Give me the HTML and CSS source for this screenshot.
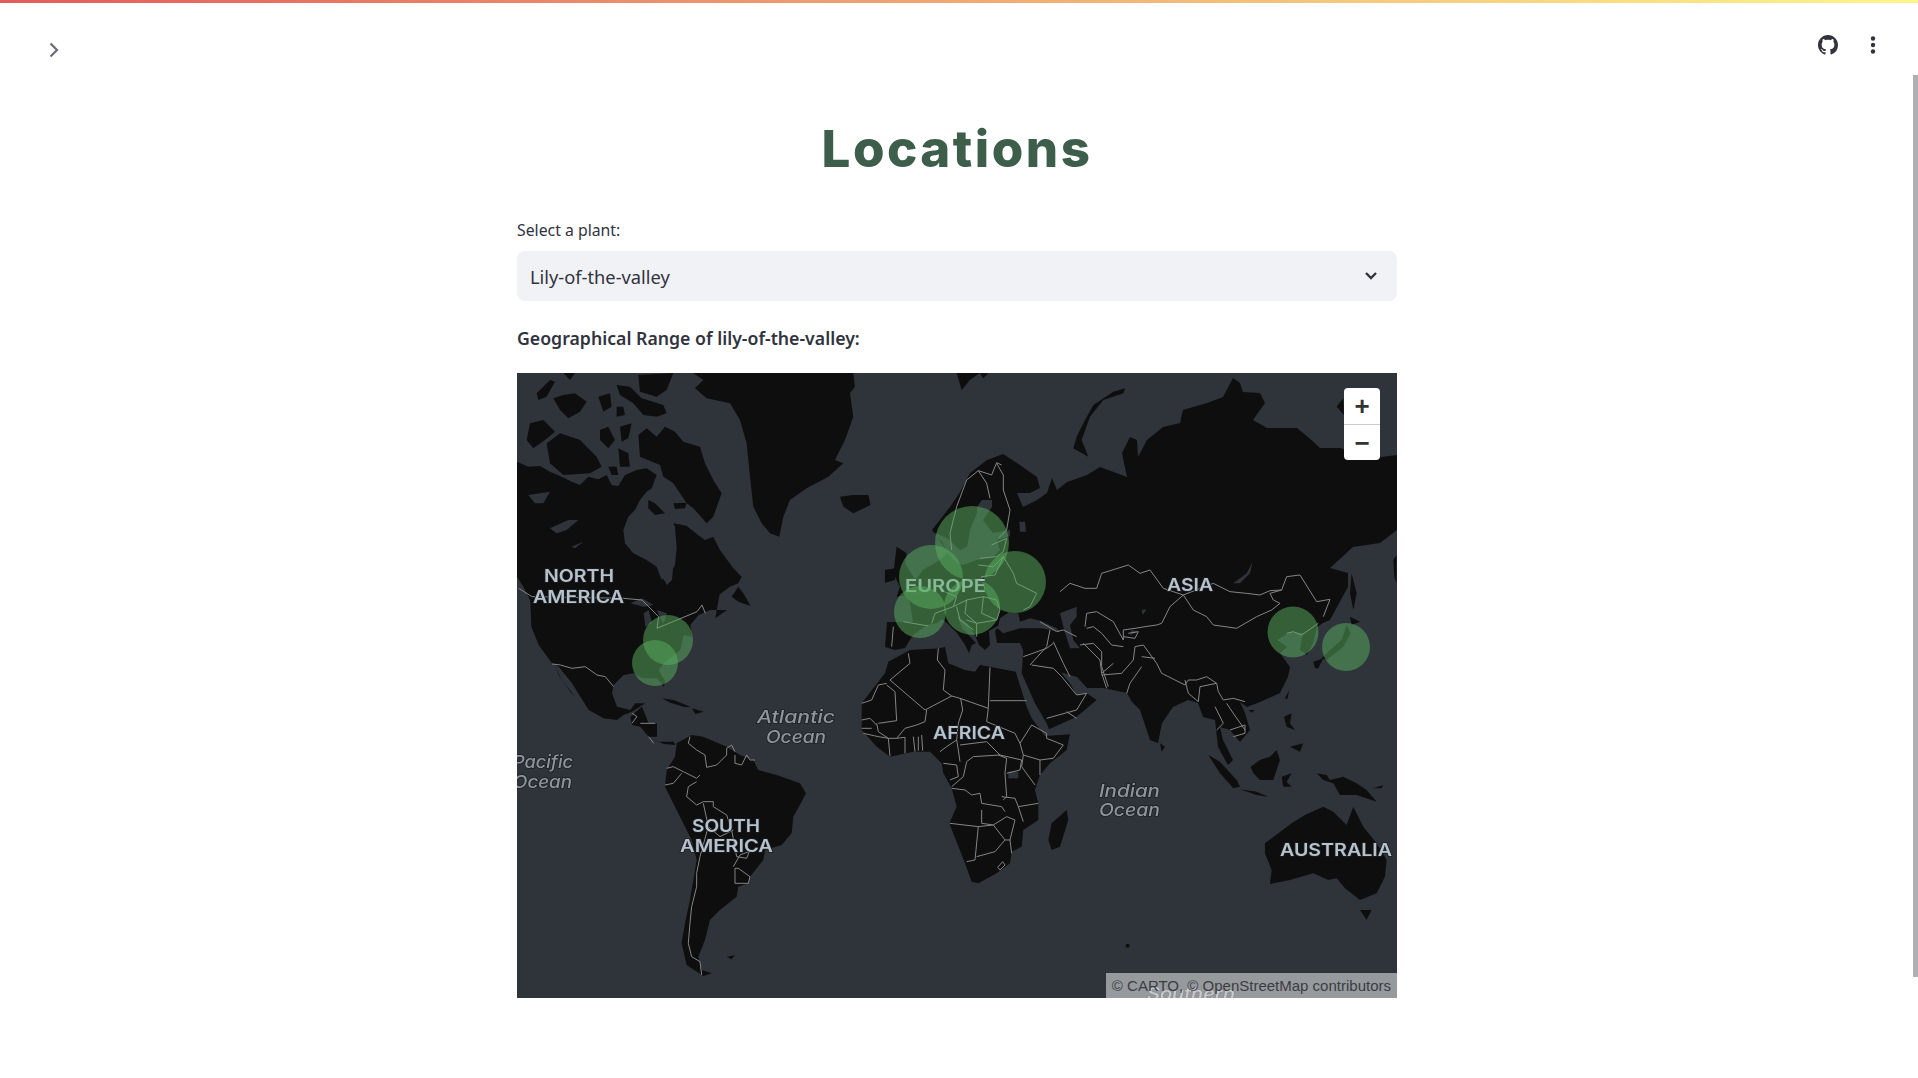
FILE: index.html
```html
<!DOCTYPE html>
<html lang="en">
<head>
  <meta charset="UTF-8" />
  <title>Locations</title>
  <link rel="stylesheet" href="styles.css">
</head>
<body>
  <div class="decoration"></div>
  <div class="scrollbar"></div>

  <header class="toolbar">
    <button class="icon-btn sidebar-toggle" aria-label="Open sidebar">
      <svg width="10" height="16" viewBox="0 0 10 16"><path d="M1.5 1.5 8 8l-6.5 6.5" fill="none" stroke="#6b6c78" stroke-width="2.2"/></svg>
    </button>
    <div class="toolbar-right">
      <button class="icon-btn" aria-label="GitHub">
        <svg width="20" height="20" viewBox="0 0 16 16"><path fill="#31333f" d="M8 0C3.58 0 0 3.58 0 8c0 3.54 2.29 6.53 5.47 7.59.4.07.55-.17.55-.38 0-.19-.01-.82-.01-1.49-2.01.37-2.53-.49-2.69-.94-.09-.23-.48-.94-.82-1.13-.28-.15-.68-.52-.01-.53.63-.01 1.08.58 1.23.82.72 1.21 1.87.87 2.33.66.07-.52.28-.87.51-1.07-1.78-.2-3.64-.89-3.64-3.95 0-.87.31-1.59.82-2.15-.08-.2-.36-1.02.08-2.12 0 0 .67-.21 2.2.82.64-.18 1.32-.27 2-.27.68 0 1.36.09 2 .27 1.53-1.04 2.2-.82 2.2-.82.44 1.1.16 1.92.08 2.12.51.56.82 1.27.82 2.15 0 3.07-1.87 3.75-3.65 3.95.29.25.54.73.54 1.48 0 1.07-.01 1.93-.01 2.2 0 .21.15.46.55.38A8.013 8.013 0 0016 8c0-4.42-3.58-8-8-8z"/></svg>
      </button>
      <button class="icon-btn" aria-label="Menu">
        <svg width="6" height="18" viewBox="0 0 6 18"><circle cx="3" cy="2.5" r="2.2" fill="#31333f"/><circle cx="3" cy="9" r="2.2" fill="#31333f"/><circle cx="3" cy="15.5" r="2.2" fill="#31333f"/></svg>
      </button>
    </div>
  </header>

  <main class="content">
    <h1 class="title">Locations</h1>

    <label class="field-label" for="plant">Select a plant:</label>
    <div class="select" id="plant">
      <span>Lily-of-the-valley</span>
      <svg width="14" height="10" viewBox="0 0 14 10"><path d="M2 2l5 5 5-5" fill="none" stroke="#31333f" stroke-width="2.4"/></svg>
    </div>

    <p class="range-heading">Geographical Range of lily-of-the-valley:</p>

    <div class="map">
      <svg class="map-canvas" width="880" height="625" viewBox="0 0 880 625">
        <rect class="water" width="880" height="625"/>

        <!-- land: each group uses the pixel grid of the crop it was traced from -->
        <g class="land">
          <g transform="translate(-17 -13) scale(.3333)">
            <path d="M51 305L85 320 120 318 150 335 185 350 215 365 240 375 265 350 295 358 320 345 335 375 355 378 375 345 410 330 440 325 470 345 455 385 440 395 420 420 405 450 385 470 370 510 375 550 400 580 440 600 470 620 485 660 510 672 512 640 525 615 530 565 525 500 520 490 560 497 590 522 615 540 640 530 660 570 700 625 725 650 715 670 690 680 650 710 620 720 590 735 560 770 520 800 400 900 100 800 95 730 70 680 51 650Z"/>
            <path d="M580 39L1060 39 1065 80 1050 100 1060 170 1035 240 1005 300 1030 310 985 350 920 385 870 420 850 470 838 530 810 520 785 490 760 440 750 350 740 250 720 180 690 130 620 115 585 85 610 60Z"/>
            <path d="M1020 410L1060 405 1105 405 1112 435 1060 460 1030 440Z"/>
            <path d="M695 710L715 680 730 700 752 738 715 725Z"/>
            <path d="M415 225L440 205 470 230 495 200 525 215 550 245 600 260 615 310 640 360 665 400 640 470 620 490 580 445 560 430 520 370 490 350 480 315 420 290Z"/>
            <path d="M445 420L465 430 495 460 465 465 445 445Z"/>
            <path d="M520 430L560 428 555 445 525 447Z"/>
            <path d="M90 190L130 180 165 215 135 240 100 265 80 240Z"/>
            <path d="M140 250L180 220 240 240 290 290 305 320 270 340 190 345 150 310Z"/>
            <path d="M110 100L150 60 165 65 140 110 115 120Z"/>
            <path d="M160 115L190 105 225 100 260 125 240 155 205 175 180 150Z"/>
            <path d="M295 110L330 100 335 140 310 155Z"/>
            <path d="M350 140L370 140 375 165 350 170Z"/>
            <path d="M300 210L325 200 345 240 325 265 300 240Z"/>
            <path d="M360 200L395 190 385 235 365 245Z"/>
            <path d="M355 265L385 280 390 320 360 320Z"/>
            <path d="M325 320L350 320 355 345 335 345Z"/>
            <path d="M350 75L390 80 425 115 490 135 500 160 470 170 430 165 400 130 360 105Z"/>
            <path d="M415 45L520 39 500 90 470 110 420 95Z"/>
            <path d="M190 39L225 39 210 60Z"/>
            <path d="M1370 39L1440 39 1410 60 1385 90Z"/>
            <path d="M1190 560L1220 580 1215 610 1240 650 1250 700 1190 710 1200 680 1180 640Z"/>
            <path d="M1155 630L1185 625 1185 660 1155 668Z"/>
          </g>

          <g transform="translate(0 187) scale(.3333)">
            <path d="M40 120L43 200 65 255 105 310 125 320 165 370 190 410 215 450 260 475 300 480 320 465 345 455 385 430 355 430 340 450 300 440 285 400 290 375 320 345 350 340 375 355 420 355 440 380 445 365 425 330 440 310 490 270 500 225 525 230 520 195 545 165 580 150 630 150 595 175 610 90 400 50Z"/>
            <path d="M115 320L135 360 175 410 160 395 125 345Z"/>
            <path d="M340 470L375 440 395 490 420 490 420 530 395 530 370 500 345 495Z"/>
            <path d="M398 530L425 545 470 545 475 555 440 552Z"/>
            <path d="M435 415L470 420 520 440 505 442 460 428Z"/>
            <path d="M525 445L560 455 535 462Z"/>
          </g>

          <g transform="translate(-17 307) scale(.3333)">
            <path d="M575 165L610 170 680 200 720 225 760 240 775 270 830 285 900 310 918 340 905 365 880 410 875 460 845 495 795 510 790 540 750 590 745 610 715 620 710 650 660 690 630 720 615 780 595 830 605 870 635 880 610 888 560 855 545 790 555 730 570 660 590 540 575 480 540 410 495 320 500 270 525 230 530 190Z"/>
            <path d="M680 830L705 826 695 838Z"/>
          </g>

          <g transform="translate(333 257) scale(.3333)">
            <path d="M180 60L270 55 285 50 295 100 345 120 375 125 390 105 420 110 497 125 530 230 545 265 585 318 660 313 650 360 600 400 570 435 555 480 565 520 565 570 520 600 515 650 485 665 480 700 440 730 385 760 365 755 345 700 300 585 300 575 320 530 305 475 280 430 275 400 240 365 190 365 120 380 80 350 35 300 35 220 70 175 105 130 115 95Z"/>
            <path d="M650 540L655 570 630 650 605 660 595 630 605 580Z"/>
            <path d="M515 130L555 220 590 280 597 298 680 260 740 210 710 190 680 195 660 160 635 130 640 125 600 60 520 60Z"/>
          </g>

          <path d="M415 157L433 134 443 119 453 100 470 87 486 81 500 90 520 104 523 115 513 120 500 120 506 134 520 127 530 120 535 105 540 117 550 109 570 102 583 94 610 104 605 80 613 64 620 67 621 84 630 67 646 54 663 50 666 37 690 30 706 24 716 5 723 10 726 19 743 20 748 30 736 47 750 55 763 55 780 55 791 64 803 75 823 75 840 80 856 85 880 82 880 157 863 170 836 174 813 195 831 200 831 214 820 234 813 247 806 250 800 254 796 270 790 282 783 277 786 260 773 259 760 267 770 274 763 280 773 294 771 304 763 320 743 329 730 334 723 329 728 340 733 357 723 369 713 357 703 354 706 367 716 387 711 392 701 374 698 347 686 344 681 330 671 327 656 334 645 350 641 370 633 367 623 337 615 329 610 320 586 315 570 315 560 304 543 299 506 277 503 270 480 270 478 258 484 251 472 258 473 272 468 277 462 272 458 262 450 250 440 243 445 255 459 270 455 272 452 280 448 272 440 260 430 250 425 246 420 250 410 252 396 262 388 275 378 277 368 274 370 249 396 249 393 230 386 217 383 209 395 212 406 197 423 187 431 179Z"/>

          <g transform="translate(463 -13) scale(.3333)">
            <path d="M435 85L400 95 340 135 310 190 290 230 280 265 325 290 305 240 330 170 370 120 430 100Z"/>
            <path d="M0 40L25 40 10 55Z"/>
            <path d="M1070 140L1090 115 1092 165Z"/>
            <path d="M1240 600L1250 585 1250 670 1243 650Z"/>
          </g>

          <g transform="translate(543 187) scale(.3333)">
            <path d="M860 195L872 220 850 260 800 300 785 295 810 270 845 240Z"/>
            <path d="M760 305L790 295 775 325 765 325Z"/>
            <path d="M870 170L900 185 875 195Z"/>
            <path d="M875 40L890 100 880 150 870 100Z"/>
            <path d="M445 585L480 605 530 660 540 680 520 685 480 640Z"/>
            <path d="M540 688L590 695 625 710 590 705Z"/>
            <path d="M572 620L600 600 630 590 650 570 660 600 640 660 600 660 580 640Z"/>
            <path d="M665 650L695 640 680 665 695 680 670 680Z"/>
            <path d="M672 470L695 460 690 490 705 510 680 500Z"/>
            <path d="M690 560L730 550 720 575Z"/>
            <path d="M675 415L688 390 682 418Z"/>
            <path d="M565 450L585 450 575 458Z"/>
            <path d="M300 550L315 560 305 575Z"/>
          </g>

          <g transform="translate(463 307) scale(.3333)">
            <path d="M1010 280L1040 285 1050 300 1090 290 1130 310 1160 330 1190 365 1130 345 1080 345 1060 310 1030 300Z"/>
            <path d="M1180 325L1210 315 1205 325Z"/>
            <path d="M855 490L935 430 975 405 1030 380 1060 395 1100 435 1120 380 1150 440 1190 490 1220 540 1215 590 1190 640 1140 660 1095 625 1070 595 1045 600 1000 580 930 600 870 612 875 570 855 520Z"/>
            <path d="M1140 690L1175 690 1160 720Z"/>
            <circle cx="443" cy="797" r="6"/>
          </g>
        </g>

        <!-- seas and lakes cut back out of the land -->
        <g class="water">
          <path d="M465 127L475 127 475 134 466 147 476 160 493 157 493 163 480 167 483 177 476 184 460 187 446 192 440 190 430 180 425 168 412 162 418 160 430 165 443 177 450 174 453 157 460 140 460 134Z"/>
          <g transform="translate(343 77) scale(.3333)">
            <path d="M478 215L495 215 498 245 480 245Z"/>
            <path d="M420 505L445 488 475 490 480 515 510 505 540 512 590 535 600 545 545 535 480 535 430 550 412 535Z"/>
          </g>
          <g transform="translate(543 187) scale(.3333)">
            <path d="M0 160L50 140 50 170 30 195 40 240 60 265 30 265 10 200Z"/>
            <path d="M520 70L560 40 578 5 570 40 540 70Z"/>
            <path d="M245 150L300 143 260 148 248 165Z"/>
            <path d="M215 210L235 215 210 225Z"/>
          </g>
          <g transform="translate(0 187) scale(.3333)">
            <path d="M340 130L375 115 410 135 380 140Z"/>
            <path d="M380 160L395 150 405 190 385 200Z"/>
            <path d="M420 150L450 160 440 190 430 175Z"/>
            <path d="M430 0L470 0 465 60 450 75 435 50Z"/>
          </g>
          <g transform="translate(-17 -13) scale(.3333)">
            <path d="M85 405L150 395 130 430 105 430Z"/>
            <path d="M150 505L205 480 235 480 200 510 170 520Z"/>
            <path d="M215 560L250 545 225 565Z"/>
          </g>
          <g transform="translate(333 257) scale(.3333)">
            <path d="M475 425L505 425 505 445 475 445Z"/>
          </g>
        </g>

        <!-- borders -->
        <g class="borders">
          <g transform="translate(0 187) scale(.3333)">
            <path d="M5 85L45 110 320 115 375 120 425 170 420 205 480 180 540 155 555 135 565 160"/>
            <path d="M105 312L130 315 165 325 205 320 240 345 265 350 290 380"/>
            <path d="M345 460L360 470 345 490M370 490L415 490M395 530L410 550"/>
          </g>
          <g transform="translate(-17 307) scale(.3333)">
            <path d="M570 170L565 190 590 210 615 225 620 262 650 255 680 225 680 205 695 195 705 215"/>
            <path d="M705 225L705 250 725 255 740 225 750 240 765 240"/>
            <path d="M500 265L520 260 550 275 590 295 600 285"/>
            <path d="M495 315L520 310 545 280"/>
            <path d="M590 305L565 320 560 350 590 375 610 365 640 365 640 380 680 405 695 450 710 530 740 535 750 510"/>
            <path d="M610 370L625 440 600 530 590 580 590 620 575 680 570 730 565 790 575 830 600 845 605 885"/>
            <path d="M625 440L660 470 700 450"/>
            <path d="M705 565L715 565 750 590 745 610 705 610ZM700 560L720 525 760 510"/>
          </g>
          <g transform="translate(333 257) scale(.3333)">
            <path d="M175 70L180 100 120 150 225 240 305 198"/>
            <path d="M265 55L262 90 285 120 280 180 305 198 330 205 415 235 420 112"/>
            <path d="M110 160L85 165 65 210 35 220M110 165L135 185 140 272 85 280"/>
            <path d="M230 240L225 275 200 285 165 295 140 325 115 325 85 305 80 280"/>
            <path d="M332 205L338 240 325 280 320 330"/>
            <path d="M415 235L410 275 495 310 510 340M420 212L530 212"/>
            <path d="M35 270L60 265 80 285M35 295L65 295M40 310L85 320 115 325 120 378"/>
            <path d="M140 325L165 322 165 370M190 320L195 365M205 320L205 362M215 315L218 362"/>
            <path d="M270 365L290 350 320 330 325 360 330 395M330 345L410 335 450 375 370 380 350 395 340 440 305 470"/>
            <path d="M280 400L320 405 325 440 300 450"/>
            <path d="M445 375L470 385 465 430 470 500 460 510"/>
            <path d="M470 430L510 420 515 390 450 375M510 340L520 375 570 390 570 435M520 375L515 410 555 465"/>
            <path d="M305 475L345 480 365 495 390 490 395 520 455 530 465 545"/>
            <path d="M395 540L395 580 430 585 465 630 480 630 495 570 470 560 430 585"/>
            <path d="M300 580L385 590 430 585M385 590L375 690 350 695M465 630L435 665 380 680M480 630L485 670"/>
            <path d="M455 500L495 505 505 530 565 520M505 530L520 575"/>
            <path d="M443 712L458 695 465 705 450 720Z"/>
            <path d="M510 340L545 285 590 310 590 325 640 345 610 385 570 390"/>
            <path d="M545 105L610 115 635 140 680 195 710 190 680 240 590 265M650 245L680 265"/>
            <path d="M610 35L640 100 660 140M520 80L590 55 610 40M600 0L590 50M540 105L590 50"/>
            <path d="M700 40L750 90 755 130 770 175M755 130L790 100"/>
          </g>
          <g transform="translate(543 187) scale(.3333)">
            <path d="M0 95L30 70 75 85 110 85 125 40 205 15 240 40 270 30 310 85 370 105"/>
            <path d="M370 105L400 150 440 170 460 195 530 205 590 170 635 150 660 130 640 120 630 100 665 90 680 50 720 45 770 125 810 118 790 170"/>
            <path d="M370 105L460 70 510 95 560 100 600 105 630 92 665 90"/>
            <path d="M370 105L330 140 305 190 290 195 255 200 225 205 190 210 190 240 160 185 110 155 80 160 75 200"/>
            <path d="M80 205L100 200 125 220 155 255 190 260M60 255L100 250 125 275 125 320 145 380"/>
            <path d="M125 345L185 340 220 300 225 260 250 255 290 310 305 340M245 290L285 295M245 320L210 370 200 400"/>
            <path d="M305 340L375 375 385 360 410 360 440 350 470 370 475 395 490 420 520 415 555 425"/>
            <path d="M375 360L385 400 415 425 420 380 470 370"/>
            <path d="M465 440L490 490 470 510M500 430L520 460 555 510M510 510L555 495 555 520 520 530"/>
            <path d="M205 220L235 215 225 235 190 230"/>
            <path d="M775 190L725 225 700 215 680 220"/>
          </g>
          <g transform="translate(343 77) scale(.3333)">
            <path d="M425 45L410 38 395 75 355 62 320 90 290 170 270 250 275 300"/>
            <path d="M355 62L380 100 390 145"/>
            <path d="M410 40L430 75 430 120 450 180 440 240 415 265"/>
            <path d="M395 285L440 265 430 305 410 320 360 325"/>
            <path d="M355 345L400 350 430 320 405 375 365 380 375 420"/>
            <path d="M430 320L460 370 470 400 530 430 510 470 490 480"/>
            <path d="M280 470L320 450 370 440 410 450 420 480 410 510 350 520 320 510"/>
            <path d="M320 450L315 490 350 520 350 560M370 440L365 490 410 510M290 470L300 510 340 540"/>
            <path d="M240 420L290 440 280 470 225 490 215 520"/>
            <path d="M130 515L205 528M100 530L95 590"/>
            <path d="M540 515L590 545 610 540 650 560"/>
          </g>
        </g>

        <g class="continent-labels">
          <text x="27" y="209" textLength="70" lengthAdjust="spacingAndGlyphs">NORTH</text>
          <text x="16" y="230" textLength="91" lengthAdjust="spacingAndGlyphs">AMERICA</text>
          <text x="388" y="219" textLength="81" lengthAdjust="spacingAndGlyphs">EUROPE</text>
          <text x="650" y="218" textLength="46" lengthAdjust="spacingAndGlyphs">ASIA</text>
          <text x="416" y="366" textLength="72" lengthAdjust="spacingAndGlyphs">AFRICA</text>
          <text x="175" y="459" textLength="68" lengthAdjust="spacingAndGlyphs">SOUTH</text>
          <text x="163" y="479" textLength="93" lengthAdjust="spacingAndGlyphs">AMERICA</text>
          <text x="763" y="483" textLength="112" lengthAdjust="spacingAndGlyphs">AUSTRALIA</text>
        </g>
        <g class="ocean-labels">
          <text x="240" y="350" textLength="78" lengthAdjust="spacingAndGlyphs">Atlantic</text>
          <text x="249" y="370" textLength="60" lengthAdjust="spacingAndGlyphs">Ocean</text>
          <text x="-4" y="395" textLength="60" lengthAdjust="spacingAndGlyphs">Pacific</text>
          <text x="-4" y="415" textLength="59" lengthAdjust="spacingAndGlyphs">Ocean</text>
          <text x="582" y="424" textLength="61" lengthAdjust="spacingAndGlyphs">Indian</text>
          <text x="582" y="443" textLength="61" lengthAdjust="spacingAndGlyphs">Ocean</text>
          <text x="630" y="627" textLength="88" lengthAdjust="spacingAndGlyphs">Southern</text>
        </g>

        <g class="markers">
          <circle cx="455" cy="170" r="37"/>
          <circle cx="414" cy="204" r="32"/>
          <circle cx="498" cy="209" r="31"/>
          <circle cx="403" cy="239" r="26"/>
          <circle cx="455" cy="234" r="28"/>
          <circle cx="151" cy="267" r="25"/>
          <circle cx="138" cy="290" r="23"/>
          <circle cx="776" cy="259" r="25.5"/>
          <circle cx="829" cy="274" r="24"/>
        </g>
      </svg>

      <div class="zoom-control">
        <a class="zoom-btn">+</a>
        <a class="zoom-btn">&minus;</a>
      </div>
      <div class="attribution">&copy; CARTO, &copy; OpenStreetMap contributors</div>
    </div>
  </main>
</body>
</html>
```

FILE: styles.css
```css
html, body {
  margin: 0;
  height: 100%;
  overflow: hidden;
  background: #fff;
}
body {
  padding-right: 4px;
  box-sizing: border-box;
  font-family: 'Noto Sans', sans-serif;
  color: #31333f;
}
.decoration {
  height: 3px;
  margin-right: -4px;
  background: linear-gradient(90deg, #e25c5c, #fdf58a);
}
.scrollbar {
  position: absolute;
  top: 75px;
  right: 0;
  width: 5px;
  height: 902px;
  background: #b0b0b2;
}
.toolbar {
  display: flex;
  justify-content: space-between;
  align-items: flex-start;
  padding: 32px 38px 0 49px;
  height: 77px;
  box-sizing: border-box;
}
.toolbar-right {
  display: flex;
  align-items: center;
  gap: 32px;
}
.icon-btn {
  display: flex;
  padding: 0;
  border: none;
  background: none;
}
.sidebar-toggle {
  margin-top: 7px;
}
.content {
  width: 880px;
  margin: 0 auto;
}
.title {
  margin: 39px 0 41px;
  text-align: center;
  font-family: 'Inter', sans-serif;
  font-size: 51px;
  line-height: 60px;
  font-weight: 800;
  letter-spacing: 2.5px;
  color: #3c5e4a;
}
.field-label {
  display: block;
  font-size: 15.8px;
  line-height: 20px;
  margin-bottom: 11px;
}
.select {
  display: flex;
  justify-content: space-between;
  align-items: center;
  height: 50px;
  padding: 0 19px 0 13px;
  border-radius: 8px;
  background: #f0f2f6;
  font-size: 18.3px;
}
.range-heading {
  margin: 25px 0 23px;
  font-size: 17.7px;
  line-height: 24px;
  font-weight: 600;
}
.map {
  position: relative;
  width: 880px;
  height: 625px;
  overflow: hidden;
}
.map-canvas {
  display: block;
  filter: blur(.4px);
}
.water {
  fill: #2f343b;
}
.land {
  fill: #0e0e0e;
}
.borders {
  fill: none;
  stroke: #858585;
  stroke-linejoin: round;
}
.borders path {
  stroke-width: 1;
  vector-effect: non-scaling-stroke;
}
.continent-labels text {
  font-family: 'Inter', sans-serif;
  font-size: 17px;
  font-weight: 600;
  fill: #b6c2cc;
  stroke: #1c1f24;
  stroke-width: 1.5px;
  paint-order: stroke;
}
.ocean-labels text {
  font-family: 'Inter', sans-serif;
  font-size: 17px;
  font-style: italic;
  font-weight: 500;
  fill: #8f959c;
  stroke: #1c1f24;
  stroke-width: 1.5px;
  paint-order: stroke;
}
.markers circle {
  fill: rgb(90, 175, 95);
  fill-opacity: .5;
}
.zoom-control {
  position: absolute;
  top: 15px;
  right: 17px;
  width: 36px;
  border-radius: 4px;
  background: #fff;
  overflow: hidden;
}
.zoom-btn {
  display: block;
  height: 36px;
  text-align: center;
  font: bold 26px/36px 'Liberation Sans', sans-serif;
  color: #333;
}
.zoom-btn + .zoom-btn {
  border-top: 1px solid #ccc;
  height: 35px;
}
.attribution {
  position: absolute;
  right: 0;
  bottom: 0;
  height: 25px;
  padding: 0 6px;
  font: 15px/25px 'Liberation Sans', sans-serif;
  color: #3a3d42;
  background: rgba(255, 255, 255, .5);
}
```
